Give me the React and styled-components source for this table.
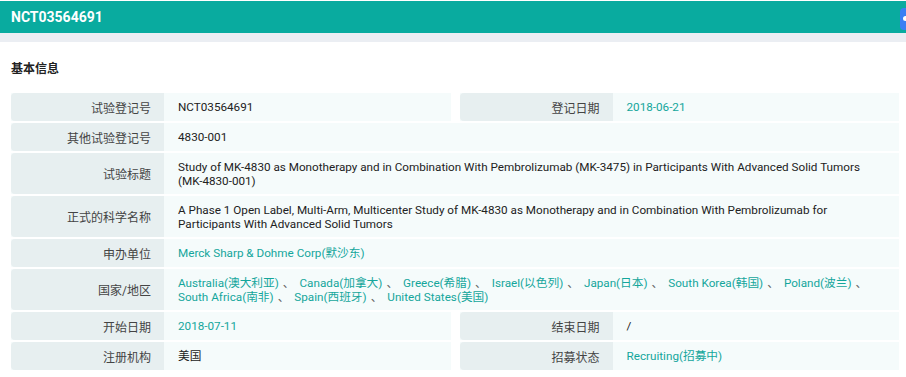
import React from 'react';
import styled, { createGlobalStyle } from 'styled-components';

const GlobalStyle = createGlobalStyle`
    html, body {
        margin: 0;
        padding: 0;
        background: #fff;
        font-family: Roboto, "Noto Sans CJK SC", sans-serif;
        color: #333;
    }
`;

const Page = styled.div`
    width: 906px;
    height: 377px;
    overflow: hidden;
    position: relative;
    background: #fff;
`;

const TopBar = styled.div`
    margin-top: 1px;
    height: 32px;
    background-color: #09ab9f;
    color: #fff;
    font-size: 14px;
    font-weight: 700;
    display: flex;
    align-items: center;
    padding-left: 11px;
`;

const FloatTab = styled.div`
    position: absolute;
    top: 8px;
    right: -6px;
    width: 12px;
    height: 22px;
    border-radius: 4px;
    background-color: #3a7ff4;

    &::after {
        content: '';
        position: absolute;
        left: 3px;
        top: 8px;
        width: 5px;
        height: 5px;
        border-radius: 50%;
        background: #fff;
    }
`;

const Strip = styled.div`
    height: 9px;
    background-color: #ebeef3;
`;

const Panel = styled.div`
    padding: 0 7px 0 11px;
`;

const SectionTitle = styled.div`
    height: 51px;
    display: flex;
    align-items: center;
    font-size: 12px;
    font-weight: 700;
    color: #222;
`;

const Table = styled.div`
    display: flex;
    flex-direction: column;
    gap: 2px;
`;

const Row = styled.div`
    display: flex;
    gap: 9px;
    min-height: ${props => props.$tall ? '41px' : '28px'};
`;

const Pair = styled.div`
    flex: 1;
    display: flex;
    background-color: #f5fbfb;
`;

const Label = styled.div`
    width: 153px;
    flex-shrink: 0;
    box-sizing: border-box;
    padding-right: 13px;
    display: flex;
    align-items: center;
    justify-content: flex-end;
    background-color: #e7eff0;
    border-radius: 4px 0 0 4px;
    font-size: 12px;
    color: #444;
`;

const Value = styled.div`
    flex: 1;
    display: flex;
    align-items: center;
    padding: 0 12px 0 14px;
    font-size: 11.7px;
    line-height: 14px;
    color: ${props => props.$link ? '#14a69b' : '#222'};
`;

const Countries = styled.div`
    line-height: 14px;
`;

const Country = styled.span`
    color: #14a69b;
    white-space: nowrap;
`;

const Sep = styled.span`
    color: #666;
    margin: 0 5px 0 4px;
`;

const countries = [
    'Australia(澳大利亚)',
    'Canada(加拿大)',
    'Greece(希腊)',
    'Israel(以色列)',
    'Japan(日本)',
    'South Korea(韩国)',
    'Poland(波兰)',
    'South Africa(南非)',
    'Spain(西班牙)',
    'United States(美国)',
];

const App = () => {
    return (
        <Page>
            <GlobalStyle />
            <TopBar>NCT03564691</TopBar>
            <FloatTab />
            <Strip />
            <Panel>
                <SectionTitle>基本信息</SectionTitle>
                <Table>
                    <Row>
                        <Pair>
                            <Label>试验登记号</Label>
                            <Value>NCT03564691</Value>
                        </Pair>
                        <Pair>
                            <Label>登记日期</Label>
                            <Value $link>2018-06-21</Value>
                        </Pair>
                    </Row>
                    <Row>
                        <Pair>
                            <Label>其他试验登记号</Label>
                            <Value>4830-001</Value>
                        </Pair>
                    </Row>
                    <Row $tall>
                        <Pair>
                            <Label>试验标题</Label>
                            <Value>
                                Study of MK-4830 as Monotherapy and in Combination With Pembrolizumab (MK-3475) in Participants With Advanced Solid Tumors (MK-4830-001)
                            </Value>
                        </Pair>
                    </Row>
                    <Row $tall>
                        <Pair>
                            <Label>正式的科学名称</Label>
                            <Value>
                                A Phase 1 Open Label, Multi-Arm, Multicenter Study of MK-4830 as Monotherapy and in Combination With Pembrolizumab for Participants With Advanced Solid Tumors
                            </Value>
                        </Pair>
                    </Row>
                    <Row>
                        <Pair>
                            <Label>申办单位</Label>
                            <Value $link>Merck Sharp &amp; Dohme Corp(默沙东)</Value>
                        </Pair>
                    </Row>
                    <Row $tall>
                        <Pair>
                            <Label>国家/地区</Label>
                            <Value>
                                <Countries>
                                    {countries.map((c, i) => (
                                        <React.Fragment key={c}>
                                            <Country>{c}</Country>
                                            {i < countries.length - 1 && <Sep>、</Sep>}
                                        </React.Fragment>
                                    ))}
                                </Countries>
                            </Value>
                        </Pair>
                    </Row>
                    <Row>
                        <Pair>
                            <Label>开始日期</Label>
                            <Value $link>2018-07-11</Value>
                        </Pair>
                        <Pair>
                            <Label>结束日期</Label>
                            <Value>/</Value>
                        </Pair>
                    </Row>
                    <Row>
                        <Pair>
                            <Label>注册机构</Label>
                            <Value>美国</Value>
                        </Pair>
                        <Pair>
                            <Label>招募状态</Label>
                            <Value $link>Recruiting(招募中)</Value>
                        </Pair>
                    </Row>
                </Table>
            </Panel>
        </Page>
    );
};

export default App;
